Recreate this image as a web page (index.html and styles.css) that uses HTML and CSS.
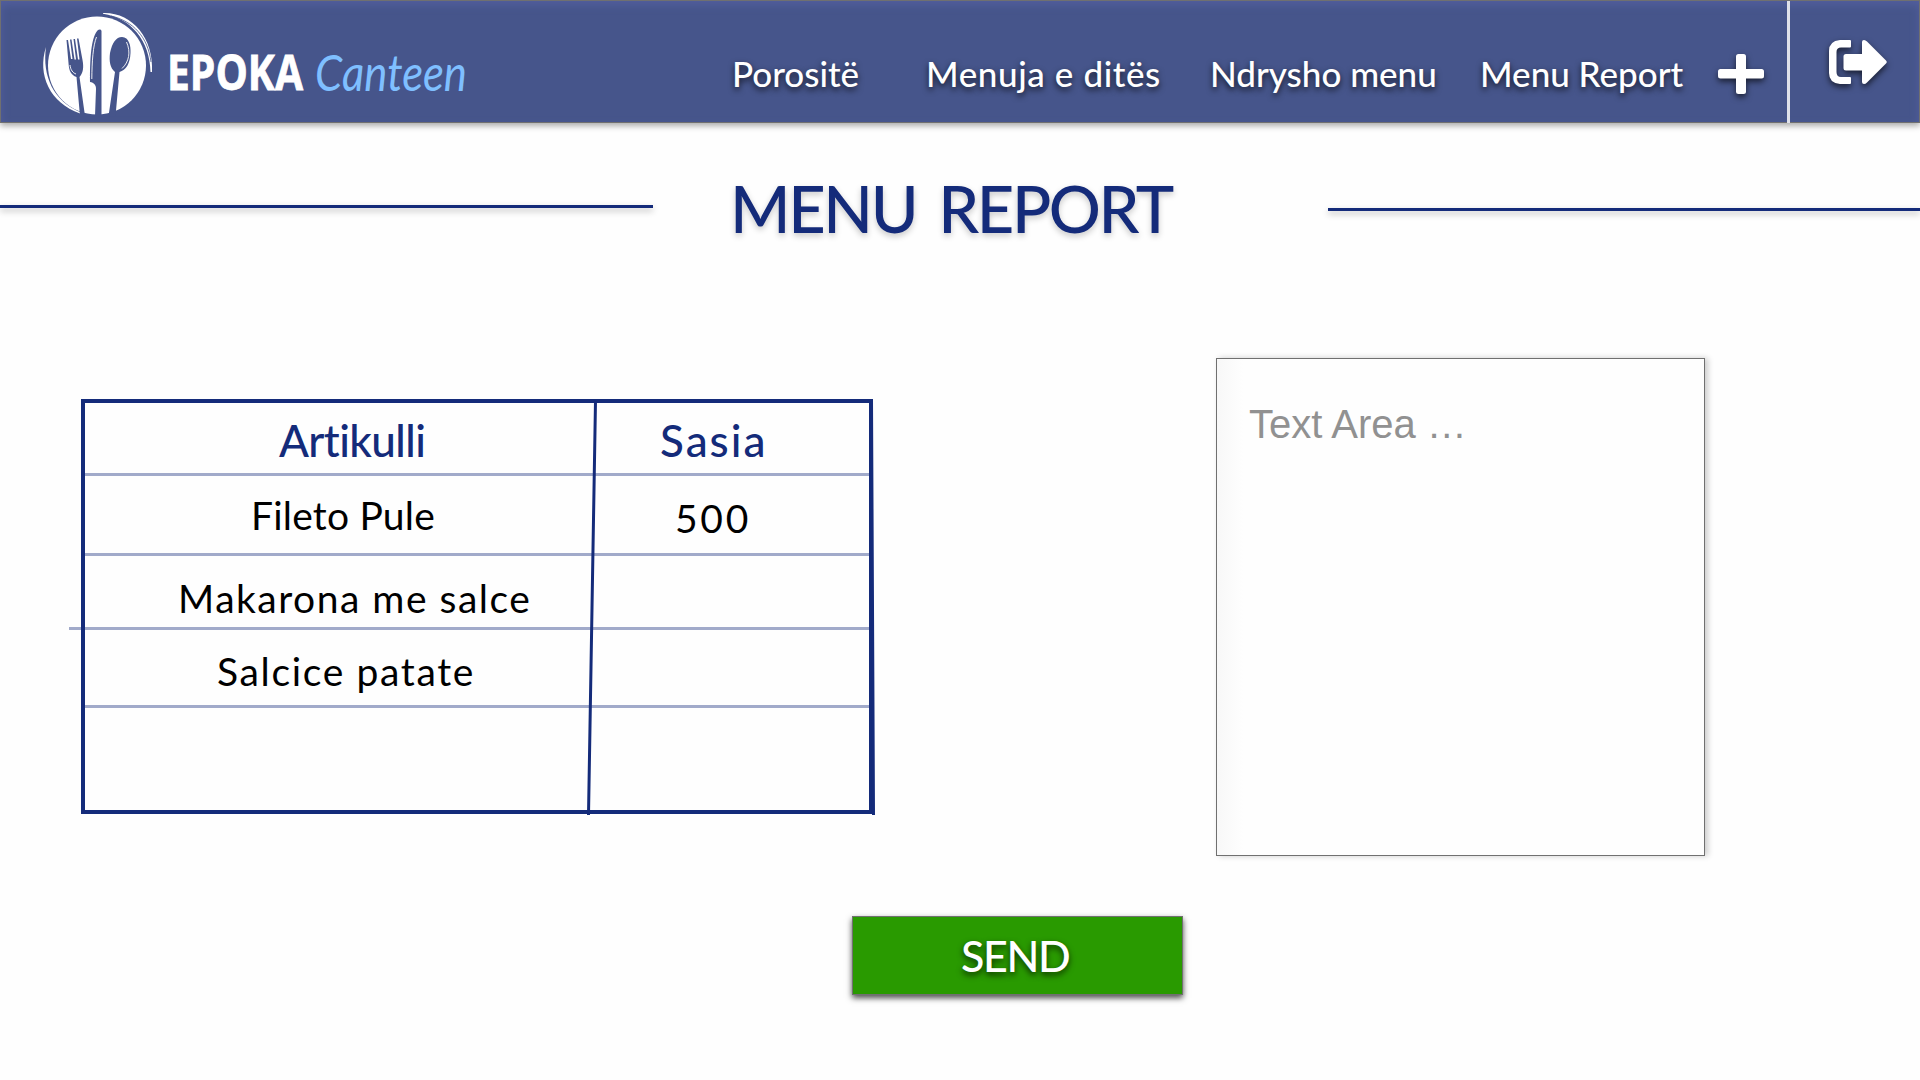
FILE: index.html
```html
<!DOCTYPE html>
<html lang="sq">
<head>
<meta charset="utf-8">
<title>EPOKA Canteen - Menu Report</title>
<link rel="stylesheet" href="styles.css">
</head>
<body>
<header class="topbar">
  <a class="brand">
    <svg class="logo" width="600" height="121" viewBox="1 1 600 121">
      <circle cx="97" cy="65.500" r="49" fill="#fff"/>
      <g fill="#fff">
        <path d="M103 13C132 12 154 38 152 72L150.500 72C150 41 131 18 103 13.800Z"/>
        <path d="M46 47C37 75 50 103 80 113.500L80 112C54 101 42 77 46 47Z"/>
      </g>
      <path d="M111 16C133 21 148 37 151 62" fill="none" stroke="#46558b" stroke-width="0.800"/>
      <g fill="#46558b">
        <path d="M66.500 40L68 40L71 59L72.500 59L70 39.500L71.500 39.500L74.500 59.500L76 59.500L73.500 39L75 39L78 59.500L79.500 59.500L77 38.500L78.500 38.500L82.500 60C84 68 83 73 79.500 77L85 116L80 116L76.500 77C71 75 69 71 68.500 63Z"/>
        <path d="M101.500 31C101.500 29.500 99.500 29 98 30C92 36 90 52 90 82C94 82.500 96 85 96 89L95 116L101.500 116Z"/>
        <path d="M122 37C129 37 131 46 130.500 53C130 64 126 70 119.500 72L115.500 116L108.500 116L115 72C110 68 109 61 110 53C112 43 116 37 122 37Z"/>
      </g>
      <g fill="none" stroke="#fff" stroke-width="0.900">
        <path d="M70 65C70.500 70 73 73 76 74"/>
        <path d="M96.500 37C93 46 92 61 91.800 79"/>
        <path d="M126.500 42C131 52 129 62 122 68.500"/>
      </g>
      <text class="logo-name" x="167" y="90" textLength="136" lengthAdjust="spacingAndGlyphs">EPOKA</text>
      <text class="logo-script" x="315" y="90.500" textLength="152" lengthAdjust="spacingAndGlyphs">Canteen</text>
    </svg>
  </a>
  <nav class="nav">
    <a>Porositë</a>
    <a class="nav-day">Menuja e ditës</a>
    <a>Ndrysho menu</a>
    <a>Menu Report</a>
  </nav>
  <svg class="icon plus" width="46" height="40" viewBox="0 0 46 40" fill="#fff">
    <rect x="0" y="15" width="46" height="9.500" rx="2.500"/>
    <rect x="18" y="0" width="10" height="40" rx="2.500"/>
  </svg>
  <div class="exit">
    <svg class="icon" width="58" height="44" viewBox="0 0 58 44" fill="#fff">
      <path d="M21 0H11Q0 1 0 11V33Q0 43 11 44H21Q22 44 22 43V38Q22 37 21 37H12Q7.500 37 7.500 32V12Q7.500 7.500 12 7.500H21Q22 7.500 22 6.500V1Q22 0 21 0Z"/>
      <path d="M17 14H33V2Q33 0 35 0Q36.500 0 38 1.500L57 20.500Q58.500 22 57 23.500L38 42.500Q36.500 44 35 44Q33 44 33 42V30.500H17Q14.500 30.500 14.500 28V16.500Q14.500 14 17 14Z"/>
    </svg>
  </div>
</header>

<section class="heading">
  <span class="rule rule-left"></span>
  <h1>MENU REPORT</h1>
  <span class="rule rule-right"></span>
</section>

<main class="content">
  <div class="table">
    <div class="row head"><span class="c-artikulli">Artikulli</span><span class="c-sasia">Sasia</span></div>
    <div class="row r1"><span class="c-fileto">Fileto Pule</span><span class="c-qty">500</span></div>
    <div class="row r2"><span class="c-makarona">Makarona me salce</span></div>
    <div class="row r3"><span class="c-salcice">Salcice patate</span></div>
    <div class="row r4"></div>
    <svg class="dividers" width="796" height="417" viewBox="0 0 796 417">
      <path d="M514.500 2L507.500 416M790.500 1L792.500 416" stroke="#142b7a" stroke-width="3" fill="none"/>
    </svg>
  </div>
  <div class="textarea">Text Area …</div>
</main>

<button class="send">SEND</button>
</body>
</html>
```
FILE: styles.css
```css
* {
  box-sizing: border-box;
}

body {
  margin: 0;
  width: 1920px;
  height: 1080px;
  overflow: hidden;
  background: #fefefe;
  font-family: Lato, sans-serif;
  font-variant-ligatures: none;
}

.topbar {
  display: flex;
  height: 123px;
  background: #46558b;
  border: 1px solid #707070;
  box-shadow: 0 3px 6px rgba(0, 0, 0, 0.32), inset 0 4px 9px rgba(90, 100, 170, 0.6);
}

.brand {
  width: 731px;
}

.logo {
  display: block;
  overflow: visible;
}

.logo-name {
  font: bold 47.500px "Open Sans", sans-serif;
  fill: #fff;
  stroke: #fff;
  stroke-width: 0.800px;
}

.logo-script {
  font: italic 50px Lato, cursive;
  fill: #7fbfff;
}

.nav {
  display: grid;
  grid-template-columns: 194px 284px 270px 238px;
  padding-top: 51px;
  font-size: 35px;
  font-weight: 500;
  line-height: 42px;
  color: #fff;
  text-shadow: 0 3px 6px rgba(0, 0, 0, 0.75);
  white-space: nowrap;
}

.nav-day {
  letter-spacing: 0.600px;
}

.icon {
  overflow: visible;
  filter: drop-shadow(0 3px 3px rgba(0, 0, 0, 0.65));
}

.plus {
  margin-top: 53px;
}

.exit {
  margin-left: 23px;
  height: 122px;
  padding: 39px 0 0 39px;
  border-left: 3px solid #dfe1ea;
}

.heading {
  display: grid;
  grid-template-columns: 653px 675px 592px;
  height: 276px;
}

.rule {
  height: 3px;
  background: #142b7a;
  box-shadow: 0 3px 6px rgba(0, 0, 0, 0.28);
}

.rule-left {
  margin-top: 82px;
}

.rule-right {
  margin-top: 85px;
}

h1 {
  margin: 46px 0 0;
  padding-left: 77px;
  font-size: 65px;
  font-weight: 500;
  line-height: 78px;
  letter-spacing: -2.400px;
  word-spacing: 8px;
  color: #142b7a;
  text-shadow: 0 3px 6px rgba(0, 0, 0, 0.22);
}

.content {
  display: flex;
  height: 517px;
  padding-left: 81px;
}

.table {
  position: relative;
  width: 792px;
  height: 415px;
  border: 4px solid #142b7a;
  font-size: 39px;
  line-height: 46px;
  color: #000;
}

.row {
  position: relative;
  display: grid;
  grid-template-columns: 509px 1fr;
  border-bottom: 3px solid #a1aaca;
  white-space: nowrap;
}

.head {
  height: 73px;
  padding-top: 14px;
  font-size: 44px;
  font-weight: 500;
  color: #142b7a;
}

.r1 {
  height: 80px;
  padding-top: 16px;
}

.r2 {
  height: 74px;
  padding-top: 19px;
}

.r2::before {
  content: "";
  position: absolute;
  left: -16px;
  bottom: -3px;
  width: 12px;
  height: 3px;
  background: #a1aaca;
}

.r3 {
  height: 78px;
  padding-top: 18px;
}

.r4 {
  height: 102px;
  border-bottom: 0;
}

.c-artikulli {
  padding-left: 194px;
  letter-spacing: -0.600px;
}

.c-sasia {
  padding-left: 66px;
  letter-spacing: 2px;
}

.c-fileto {
  padding-left: 166px;
  letter-spacing: 0.200px;
}

.c-qty {
  padding: 3px 0 0 81px;
  letter-spacing: 2.700px;
}

.c-makarona {
  padding-left: 93px;
  letter-spacing: 1.500px;
}

.c-salcice {
  padding-left: 132px;
  letter-spacing: 1.650px;
}

.dividers {
  position: absolute;
  left: -4px;
  top: -4px;
}

.textarea {
  width: 489px;
  height: 498px;
  margin: -41px 0 0 343px;
  padding: 42px 32px;
  border: 1px solid #707070;
  background: linear-gradient(90deg, #f8f8f8, #fefefe 26px);
  box-shadow: 3px 0 6px rgba(0, 0, 0, 0.2);
  font: 40px/46px "Liberation Sans", sans-serif;
  color: #919191;
}

.send {
  display: block;
  width: 331px;
  height: 79px;
  margin-left: 852px;
  padding: 0 0 0 108px;
  border: 1px solid #707070;
  background: #299a00;
  box-shadow: 0 3px 6px rgba(0, 0, 0, 0.7);
  font: 500 43px/77px Lato, sans-serif;
  letter-spacing: -1.400px;
  text-align: left;
  color: #fff;
  text-shadow: 0 3px 6px rgba(0, 0, 0, 0.7);
}
```
